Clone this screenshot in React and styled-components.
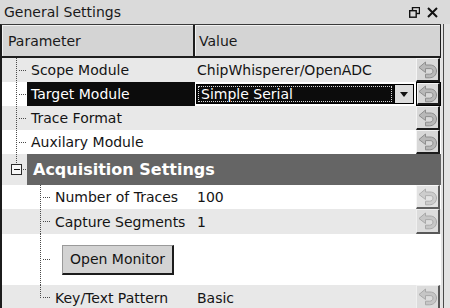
import React from 'react';
import styled, { createGlobalStyle, css } from 'styled-components';

const Global = createGlobalStyle`
  html, body { margin: 0; padding: 0; background: #e3e3e3; }
  body {
    font-family: "DejaVu Sans", "Liberation Sans", sans-serif;
    font-size: 14px;
    color: #141414;
    width: 450px;
    height: 308px;
    overflow: hidden;
  }
`;

const Window = styled.div`
  width: 450px;
  height: 308px;
  display: flex;
  flex-direction: column;
  background: #e3e3e3;
  overflow: hidden;
`;

const TitleBar = styled.div`
  height: 24px;
  flex: none;
  display: flex;
  align-items: center;
  padding: 0 12px 0 4px;
  box-sizing: border-box;
  background: #dadada;
`;

const Title = styled.span`
  flex: 1;
  font-size: 14px;
  line-height: 24px;
  color: #1a1a1a;
`;

const TitleIcons = styled.div`
  display: flex;
  align-items: center;
  gap: 7px;
`;

const Body = styled.div`
  flex: 1;
  display: flex;
  min-height: 0;
`;

const Tree = styled.div`
  width: 439px;
  flex: none;
  border-left: 2px solid #1c1c1c;
  border-top: 1px solid #3a3a3a;
  display: flex;
  flex-direction: column;
  background: #fff;
  overflow: hidden;
`;

const Gutter = styled.div`
  flex: 1;
  display: flex;
  padding-left: 2px;
  background: #e3e3e3;
`;

const GutterLine = styled.div`
  width: 1px;
  background: #4a4a4a;
`;

const Header = styled.div`
  height: 31px;
  flex: none;
  display: grid;
  grid-template-columns: 193px 1fr;
  border-bottom: 2px solid #1e1e1e;
  background: #d4d4d4;
`;

const HeaderCell = styled.div`
  display: flex;
  align-items: center;
  padding-left: ${p => p.$pad}px;
  border-right: ${p => p.$w}px solid #1e1e1e;
  box-shadow: inset 1px 1px 0 #f2f2f2;
  font-size: 14px;
  color: #1a1a1a;
`;

const Row = styled.div`
  height: ${p => p.$h}px;
  flex: none;
  display: grid;
  grid-template-columns: 193px 221px 25px;
  background: ${p => (p.$alt ? '#e8e8e8' : '#ffffff')};
`;

const GroupRow = styled.div`
  height: ${p => p.$h}px;
  flex: none;
  display: flex;
  background: #e8e8e8;
`;

const GroupBand = styled.div`
  flex: 1;
  display: flex;
  align-items: center;
  padding-left: 6px;
  background: #656565;
  color: #ffffff;
  font-weight: bold;
  font-size: 16px;
`;

const ParamCell = styled.div`
  display: flex;
  align-items: stretch;
  min-width: 0;
`;

const Label = styled.div`
  flex: 1;
  display: flex;
  align-items: center;
  padding-left: 4px;
  white-space: nowrap;
  ${p => p.$selected && css`
    background: #0c0c0c;
    color: #ffffff;
  `}
`;

const ValueCell = styled.div`
  display: flex;
  align-items: center;
  padding-left: 2px;
  white-space: nowrap;
  overflow: hidden;
`;

const Combo = styled.div`
  margin-left: -1px;
  width: 218px;
  height: 20px;
  box-sizing: border-box;
  display: flex;
  background: #0c0c0c;
  border: 1px solid #000;
`;

const ComboText = styled.div`
  flex: 1;
  margin: 1px 2px 1px 1px;
  display: flex;
  align-items: center;
  padding-left: 2px;
  color: #fff;
  border: 1px dotted #d8d8d8;
  font-size: 14px;
`;

const ComboArrow = styled.div`
  width: 18px;
  display: flex;
  align-items: center;
  justify-content: center;
  background: #dcdcdc;
  border-left: 1px solid #000;
`;

const ButtonCell = styled.div`
  display: flex;
  align-items: stretch;
  ${p => p.$focused && css`
    outline: 1px solid #000;
    outline-offset: -1px;
    padding: 1px;
  `}
`;

const ResetButton = styled.div`
  width: 24px;
  box-sizing: border-box;
  background: #d8d8d8;
  border: 1px solid;
  border-color: #f4f4f4 #1c1c1c #1c1c1c #f4f4f4;
  border-width: 1px 2px 2px 1px;
  display: flex;
  align-items: center;
  justify-content: center;
  opacity: ${p => (p.$faint ? 0.7 : 1)};
`;

const ActionArea = styled.div`
  flex: 1;
  display: flex;
  align-items: center;
  padding-left: 11px;
`;

const PushButton = styled.div`
  width: 112px;
  height: 30px;
  box-sizing: border-box;
  display: flex;
  align-items: center;
  justify-content: center;
  background: #d3d3d3;
  border: 1px solid;
  border-color: #9a9a9a #1c1c1c #1c1c1c #9a9a9a;
  border-width: 1px 2px 2px 1px;
  font-size: 14px;
  color: #141414;
`;

const Spacer = styled.div`
  grid-column: span 2;
`;

function UndoIcon() {
  return (
    <svg width="20" height="18" viewBox="0 0 20 18">
      <path
        d="M1 6.5 L7.5 1 V4 H12 C16.5 4 18.5 7 18.5 10 C18.5 14 15.5 16.8 11.5 16.8 H7.5 V13.2 H11.5 C13.6 13.2 15 12 15 10 C15 8.4 13.8 7.6 12.2 7.6 H7.5 V11.5 Z"
        fill="#b8b8b8"
        stroke="#8e8e8e"
        strokeWidth="1"
        strokeLinejoin="round"
      />
    </svg>
  );
}

function FloatIcon() {
  return (
    <svg width="11" height="11" viewBox="0 0 11 11">
      <rect x="3.5" y="0.5" width="7" height="6" fill="none" stroke="#111" strokeWidth="1.4" />
      <rect x="0.7" y="3.7" width="6.5" height="6.5" fill="#dadada" stroke="#111" strokeWidth="1.4" />
    </svg>
  );
}

function CloseIcon() {
  return (
    <svg width="11" height="11" viewBox="0 0 11 11">
      <path d="M1 1 L10 10 M10 1 L1 10" stroke="#111" strokeWidth="2" />
    </svg>
  );
}

function ArrowDown() {
  return (
    <svg width="8" height="5" viewBox="0 0 8 5">
      <path d="M0 0 H8 L4 5 Z" fill="#111" />
    </svg>
  );
}

const dash = { stroke: '#4a4a4a', strokeWidth: 1, strokeDasharray: '1 1', shapeRendering: 'crispEdges' };

function Branch({ depth, h, kind }) {
  const w = depth === 0 ? 25 : 49;
  const x = depth === 0 ? 14.5 : 38.5;
  const mid = Math.floor(h / 2) + 0.5;
  if (kind === 'group') {
    return (
      <svg width={w} height={h} style={{ flex: 'none' }}>
        <line x1={x} y1={0} x2={x} y2={mid - 5} {...dash} />
        <rect x={x - 5} y={mid - 5} width={10} height={10} fill="#f6f6f6" stroke="#2a2a2a" shapeRendering="crispEdges" />
        <line x1={x - 2.5} y1={mid} x2={x + 3} y2={mid} stroke="#111" strokeWidth="1" shapeRendering="crispEdges" />
        <line x1={x + 6} y1={mid} x2={w} y2={mid} {...dash} />
      </svg>
    );
  }
  return (
    <svg width={w} height={h} style={{ flex: 'none' }}>
      <line x1={x} y1={0} x2={x} y2={kind === 'last' ? mid : h} {...dash} />
      <line x1={x + 2} y1={mid} x2={w} y2={mid} {...dash} />
    </svg>
  );
}

const rows = [
  { type: 'param', depth: 0, label: 'Scope Module', value: 'ChipWhisperer/OpenADC', h: 24 },
  { type: 'param', depth: 0, label: 'Target Module', combo: 'Simple Serial', selected: true, h: 24 },
  { type: 'param', depth: 0, label: 'Trace Format', value: '', h: 24 },
  { type: 'param', depth: 0, label: 'Auxilary Module', value: '', h: 24 },
  { type: 'group', label: 'Acquisition Settings', h: 31 },
  { type: 'param', depth: 1, label: 'Number of Traces', value: '100', h: 24, faint: true },
  { type: 'param', depth: 1, label: 'Capture Segments', value: '1', h: 25, faint: true },
  { type: 'action', depth: 1, label: 'Open Monitor', h: 51 },
  { type: 'param', depth: 1, label: 'Key/Text Pattern', value: 'Basic', h: 25, faint: true, last: true },
];

export default function App() {
  return (
    <>
      <Global />
      <Window>
        <TitleBar>
          <Title>General Settings</Title>
          <TitleIcons>
            <FloatIcon />
            <CloseIcon />
          </TitleIcons>
        </TitleBar>
        <Body>
          <Tree>
            <Header>
              <HeaderCell $pad={6} $w={2}>Parameter</HeaderCell>
              <HeaderCell $pad={4} $w={1}>Value</HeaderCell>
            </Header>
            {rows.map((r, i) => {
              const alt = i % 2 === 0;
              if (r.type === 'group') {
                return (
                  <GroupRow key={i} $h={r.h}>
                    <Branch depth={0} h={r.h} kind="group" />
                    <GroupBand>{r.label}</GroupBand>
                  </GroupRow>
                );
              }
              if (r.type === 'action') {
                return (
                  <Row key={i} $h={r.h} $alt={alt}>
                    <ParamCell>
                      <Branch depth={r.depth} h={r.h} kind="mid" />
                      <ActionArea>
                        <PushButton>{r.label}</PushButton>
                      </ActionArea>
                    </ParamCell>
                    <Spacer />
                  </Row>
                );
              }
              return (
                <Row key={i} $h={r.h} $alt={alt}>
                  <ParamCell>
                    <Branch depth={r.depth} h={r.h} kind={r.last ? 'last' : 'mid'} />
                    <Label $selected={r.selected}>{r.label}</Label>
                  </ParamCell>
                  <ValueCell>
                    {r.combo ? (
                      <Combo>
                        <ComboText>{r.combo}</ComboText>
                        <ComboArrow>
                          <ArrowDown />
                        </ComboArrow>
                      </Combo>
                    ) : (
                      r.value
                    )}
                  </ValueCell>
                  <ButtonCell $focused={r.selected}>
                    <ResetButton $faint={r.faint}>
                      <UndoIcon />
                    </ResetButton>
                  </ButtonCell>
                </Row>
              );
            })}
          </Tree>
          <Gutter>
            <GutterLine />
          </Gutter>
        </Body>
      </Window>
    </>
  );
}
